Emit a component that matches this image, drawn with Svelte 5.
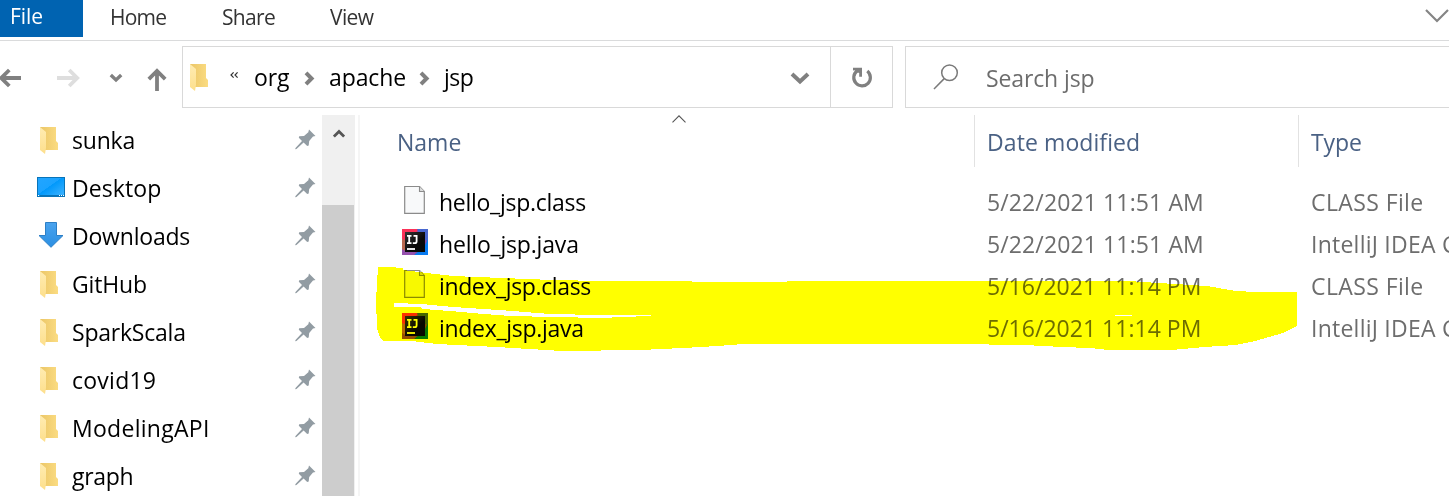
<script>
  const tabs = [
    { label: 'Home', ls: -0.75 },
    { label: 'Share', ls: -0.66 },
    { label: 'View', ls: -0.6 }
  ];
  const places = [
    { name: 'sunka', icon: 'folder', ls: -0.2 },
    { name: 'Desktop', icon: 'desktop', ls: 0.1 },
    { name: 'Downloads', icon: 'download', ls: -0.2 },
    { name: 'GitHub', icon: 'folder', ls: -0.16 },
    { name: 'SparkScala', icon: 'folder', ls: -0.22 },
    { name: 'covid19', icon: 'folder', ls: 0.25 },
    { name: 'ModelingAPI', icon: 'folder', ls: 0.28 },
    { name: 'graph', icon: 'folder', ls: -0.3 }
  ];
  const files = [
    { name: 'hello_jsp.class', ls: -0.27, date: '5/22/2021 11:51 AM', dls: 0.12, java: false },
    { name: 'hello_jsp.java', ls: -0.18, date: '5/22/2021 11:51 AM', dls: 0.12, java: true },
    { name: 'index_jsp.class', ls: -0.37, date: '5/16/2021 11:14 PM', dls: 0.02, java: false },
    { name: 'index_jsp.java', ls: -0.29, date: '5/16/2021 11:14 PM', dls: 0.02, java: true }
  ];
</script>

{#snippet folder()}
  <svg class="folder" width="20" height="28" viewBox="0 0 20 28">
    <defs>
      <linearGradient id="fb" x1="0" x2="1"><stop offset="0" stop-color="#ebc667" /><stop offset="1" stop-color="#fbdc82" /></linearGradient>
      <linearGradient id="ff" x1="0" x2="0" y1="0" y2="1"><stop offset="0" stop-color="#ffecb2" /><stop offset="1" stop-color="#fddf8c" /></linearGradient>
    </defs>
    <path d="M1 0H17V14L19 16V23H1Z" fill="url(#fb)" />
    <path d="M1 0L7 5V21L6 27L1 23Z" fill="url(#ff)" />
  </svg>
{/snippet}

{#snippet pin()}
  <svg class="pin" width="21" height="21" viewBox="0 0 21 21">
    <path d="M14 .5L20.5 7L18 7.6L14.2 12L13.7 16.6L12.2 17L8.6 13.4L1.5 20L.2 20.3L.5 19L7 11.9L3.8 8.7L4.2 7.2L9 7.1L13.3 3.2Z" fill="#929ca3" />
  </svg>
{/snippet}

<div class="window">
  <nav class="ribbon">
    <div class="file-tab">File</div>
    <div class="tabs">
      {#each tabs as t}
        <span style="letter-spacing:{t.ls}px">{t.label}</span>
      {/each}
    </div>
    <svg class="expand" width="24" height="16" viewBox="0 0 24 16"><path d="M1 2L12 13L23 2" fill="none" stroke="#858585" stroke-width="2.2" /></svg>
  </nav>

  <div class="toolbar">
    <div class="nav">
      <svg width="182" height="62" viewBox="0 0 182 62" fill="none" stroke="#808080" stroke-width="3.8">
        <path d="M21 32H1.5M9.3 24L1.3 32L9.3 40" />
        <g stroke="#dedede"><path d="M57 32H77M69.2 24L77.2 32L69.2 40" /></g>
        <path d="M110.8 29L116 34L121.2 29" stroke-width="3.4" />
        <path d="M157 45V25M148.8 33.2L157 25L165.2 33.2" />
      </svg>
    </div>
    <div class="address">
      {@render folder()}
      <svg class="more" width="8" height="6" viewBox="0 0 8 6" fill="none" stroke="#333" stroke-width="1.2"><path d="M3.6 .4L1 3L3.6 5.6M7.6 .4L5 3L7.6 5.6" /></svg>
      <span class="org">org</span>
      <svg class="crumb" width="11" height="15" viewBox="0 0 11 15"><path d="M2 1.8L7.6 7.5L2 13.2" fill="none" stroke="#808080" stroke-width="4" /></svg>
      <span class="apache">apache</span>
      <svg class="crumb" width="11" height="15" viewBox="0 0 11 15"><path d="M2 1.8L7.6 7.5L2 13.2" fill="none" stroke="#808080" stroke-width="4" /></svg>
      <span class="jsp">jsp</span>
      <svg class="drop" width="20" height="13" viewBox="0 0 20 13"><path d="M2 2L10 9.5L18 2" fill="none" stroke="#808080" stroke-width="4" /></svg>
      <div class="refresh">
        <svg width="22" height="22" viewBox="0 0 22 22"><path d="M16.3 4.1A8.3 8.3 0 1 1 6.1 3.9" fill="none" stroke="#808080" stroke-width="3.2" /><path d="M2 .8H11V9.8H8.2V6L6 5.2L3.5 3.2L2 3.4Z" fill="#808080" /></svg>
      </div>
    </div>
    <div class="search">
      <svg width="26" height="26" viewBox="0 0 26 26" fill="none" stroke="#7a7a7a" stroke-width="1.5"><circle cx="16.5" cy="8.8" r="7.8" /><path d="M11.2 14.6L1 25" /></svg>
      <span>Search jsp</span>
    </div>
  </div>

  <div class="content">
    <aside class="sidebar">
      {#each places as p}
        <div class="place">
          <div class="picon">
            {#if p.icon === 'folder'}
              {@render folder()}
            {:else if p.icon === 'desktop'}
              <svg class="desktop" width="28" height="20" viewBox="0 0 28 20">
                <defs><linearGradient id="dk" x1="0" y1="0" x2="1" y2="1"><stop offset="0" stop-color="#22a5ff" /><stop offset=".45" stop-color="#1ba3ff" /><stop offset=".46" stop-color="#0098fb" /><stop offset="1" stop-color="#43b5ff" /></linearGradient></defs>
                <rect x=".5" y=".5" width="27" height="19" fill="url(#dk)" stroke="#0874b9" />
                <path d="M1 18.5H27" stroke="#0874b9" />
                <path d="M1 18.5h1.2M22 18.5h1M24 18.5h1M26 18.5h1" stroke="#fff" />
              </svg>
            {:else}
              <svg class="download" width="26" height="26" viewBox="0 0 26 26">
                <defs><linearGradient id="dl" x1="0" x2="0" y1="0" y2="1"><stop offset="0" stop-color="#4aa3ee" /><stop offset="1" stop-color="#2b8fe2" /></linearGradient></defs>
                <path d="M7.5 .5H18.5V13.5H25L13 25.3L1 13.5H7.5Z" fill="url(#dl)" stroke="#2d7fc6" />
              </svg>
            {/if}
          </div>
          <span class="pname" style="letter-spacing:{p.ls}px">{p.name}</span>
          {@render pin()}
        </div>
      {/each}
    </aside>
    <div class="scrollbar">
      <svg width="12" height="9" viewBox="0 0 12 9"><path d="M.9 7.6L6 2.4L11.1 7.6" fill="none" stroke="#555" stroke-width="2.8" /></svg>
      <div class="thumb"></div>
    </div>
    <div class="divider"></div>

    <main class="list">
      <div class="row head">
        <span class="c1">Name</span>
        <span class="c2">Date modified</span>
        <span class="c3">Type</span>
        <svg class="sort" width="14" height="8" viewBox="0 0 14 8"><path d="M.5 7.3L7 .8L13.5 7.3" fill="none" stroke="#555" stroke-width="1.1" /></svg>
      </div>
      <div class="rows">
        {#each files as f}
          <div class="row file">
            <div class="c1">
              <div class="ficon">
                {#if f.java}
                  <svg class="ij" width="26" height="26" viewBox="0 0 26 26">
                    <defs><linearGradient id="ijb" x1="0" y1="0" x2="1" y2="1"><stop offset="0" stop-color="#333" /><stop offset=".6" stop-color="#080808" /></linearGradient></defs>
                    <rect width="26" height="26" fill="#8a4ba0" />
                    <path d="M0 0H16L13 6L3 13L0 11Z" fill="#fb3158" />
                    <path d="M15 0H26V12L20 10Z" fill="#4867cf" />
                    <path d="M26 10V26H12L22 18Z" fill="#087bf0" />
                    <path d="M0 10L5 12V24L0 26Z" fill="#b86950" />
                    <path d="M0 20L5 23H14L12 26H0Z" fill="#9551ad" />
                    <rect x="3" y="3" width="20" height="20" fill="url(#ijb)" />
                    <path d="M5 6.8H9.5M7.2 6.8V14M5 14.2H9.5M11.5 6.8H15.5M14.6 6.8V12.2Q14.6 14.2 12.8 14.2H10.8" fill="none" stroke="#fff" stroke-width="1.8" />
                    <path d="M5 20H13" stroke="#fff" stroke-width="1.8" />
                  </svg>
                {:else}
                  <svg class="doc" width="21" height="28" viewBox="0 0 21 28">
                    <path d="M.7 .5H15.5L20.3 5.5V27.3H.7Z" fill="#f8f9fa" stroke="#8b8b8b" stroke-width="1.2" />
                    <path d="M15.5 .5V5.5H20.3" fill="#dcdddd" stroke="#8b8b8b" stroke-width="1.1" />
                  </svg>
                {/if}
              </div>
              <span style="letter-spacing:{f.ls}px">{f.name}</span>
            </div>
            <span class="c2" style="letter-spacing:{f.dls}px">{f.date}</span>
            {#if f.java}
              <span class="c3 idea">IntelliJ IDEA C</span>
            {:else}
              <span class="c3 cls">CLASS File</span>
            {/if}
          </div>
        {/each}
      </div>
      <svg class="marker" width="930" height="90" viewBox="370 265 930 90" shape-rendering="crispEdges">
        <path fill="#ff0" fill-rule="evenodd" d="M378 267H389L403 268V270L427 273L453 276L502 278L553 280L603 281H692V282H787V281H1128L1159 283L1207 286L1236 291L1255 292H1297V326L1283 333L1255 341L1236 345L1204 347L1172 350H1108L1090 348L1062 347L1025 345L953 344H744L717 346L683 348L640 350L562 351L497 347L437 344L412 341H384L380 338L377 328L376 300Z
          M394 303L422 304L453 307L483 309L513 311L550 314L600 315H651V316L620 317L603 318L553 317L510 316L472 313L450 311L423 309L420 307H394Z M1115 315H1132V316H1115Z" />
      </svg>
    </main>
  </div>
</div>

<style>
  :global(body) { margin: 0; background: #fff; }
  .window {
    width: 1449px; height: 496px; overflow: hidden; display: flex; flex-direction: column;
    font-family: "Open Sans", "Noto Sans", sans-serif; font-size: 23px; line-height: 32px; color: #000; white-space: nowrap;
  }
  svg { display: block; flex: none; }
  .ribbon { height: 40px; flex: none; display: flex; border-bottom: 1px solid #dadbdc; font-size: 21px; color: #333; }
  .file-tab { width: 83px; height: 37px; box-sizing: border-box; padding-left: 10px; line-height: 33px; background: #0063b1; color: #fff; letter-spacing: -.1px; }
  .tabs { display: grid; grid-template-columns: 112px 108px 200px; padding-left: 27px; line-height: 34px; }
  .expand { margin: 8px 0 0 auto; }
  .toolbar { height: 62px; padding-top: 5px; flex: none; display: flex; }
  .nav { width: 182px; }
  .address { width: 711px; height: 62px; box-sizing: border-box; border: 1px solid #d9d9d9; display: flex; align-items: center; padding-left: 6px; }
  .address .folder { margin-top: 2px; }
  .more { margin-left: 21px; margin-top: -4px; }
  .org { margin-left: 16px; width: 36px; letter-spacing: -.12px; }
  .crumb { margin-left: 14px; margin-top: 2px; }
  .apache { margin-left: 14px; width: 76px; letter-spacing: -.1px; }
  .jsp { margin-left: 14px; letter-spacing: -.5px; }
  .drop { margin-left: auto; margin-top: 2px; }
  .refresh { width: 61px; height: 60px; margin-left: 20px; border-left: 1px solid #d9d9d9; display: flex; align-items: center; justify-content: center; }
  .refresh svg { margin-top: 2px; }
  .search { flex: 1; height: 62px; box-sizing: border-box; margin-left: 12px; border: 1px solid #d9d9d9; border-right: 0; display: flex; align-items: center; color: #6d6d6d; }
  .search svg { margin-left: 27px; }
  .search span { margin: 2px 0 0 27px; letter-spacing: -.12px; }
  .content { flex: 1; display: flex; padding-top: 7px; min-height: 0; }
  .sidebar { width: 322px; overflow: hidden; padding-top: 2px; box-sizing: border-box; }
  .place { height: 48px; display: flex; align-items: center; }
  .picon { width: 72px; }
  .picon .folder { margin-left: 39px; }
  .desktop { margin-left: 37px; margin-top: -4px; }
  .download { margin-left: 38px; margin-top: -4px; }
  .pname { width: 223px; margin-top: -2px; }
  .pin { margin-top: -4px; }
  .scrollbar { width: 33px; background: #f0f0f0; display: flex; flex-direction: column; }
  .scrollbar svg { margin: 14px 0 0 11px; }
  .thumb { margin-top: 67px; width: 32px; flex: 1; background: #cdcdcd; }
  .divider { width: 2px; margin-left: 3px; background: #f5f5f5; }
  .list { flex: 1; position: relative; min-width: 0; overflow: hidden; }
  .row { display: grid; grid-template-columns: 614px 324px 1fr; }
  .head { height: 52px; grid-template-rows: 52px; line-height: 54px; color: #4a6184; margin-bottom: 14px; }
  .head .c1 { padding-left: 37px; }
  .head .c2 { border-left: 1px solid #e2e2e2; padding-left: 12px; letter-spacing: .09px; }
  .head .c3 { border-left: 1px solid #e2e2e2; padding-left: 12px; letter-spacing: -.09px; }
  .sort { position: absolute; left: 312px; top: 0; }
  .file { height: 42px; line-height: 42px; color: #6d6d6d; }
  .file .c1 { display: flex; align-items: center; color: #000; }
  .file .c2 { padding-left: 13px; }
  .file .c3 { padding-left: 13px; }
  .cls { letter-spacing: .4px; }
  .idea { letter-spacing: .24px; }
  .ficon { width: 79px; }
  .doc { margin-left: 44px; margin-top: -5px; }
  .ij { margin-left: 42px; margin-top: -4px; }
  .marker { position: absolute; left: 10px; top: 150px; mix-blend-mode: multiply; pointer-events: none; }
</style>
